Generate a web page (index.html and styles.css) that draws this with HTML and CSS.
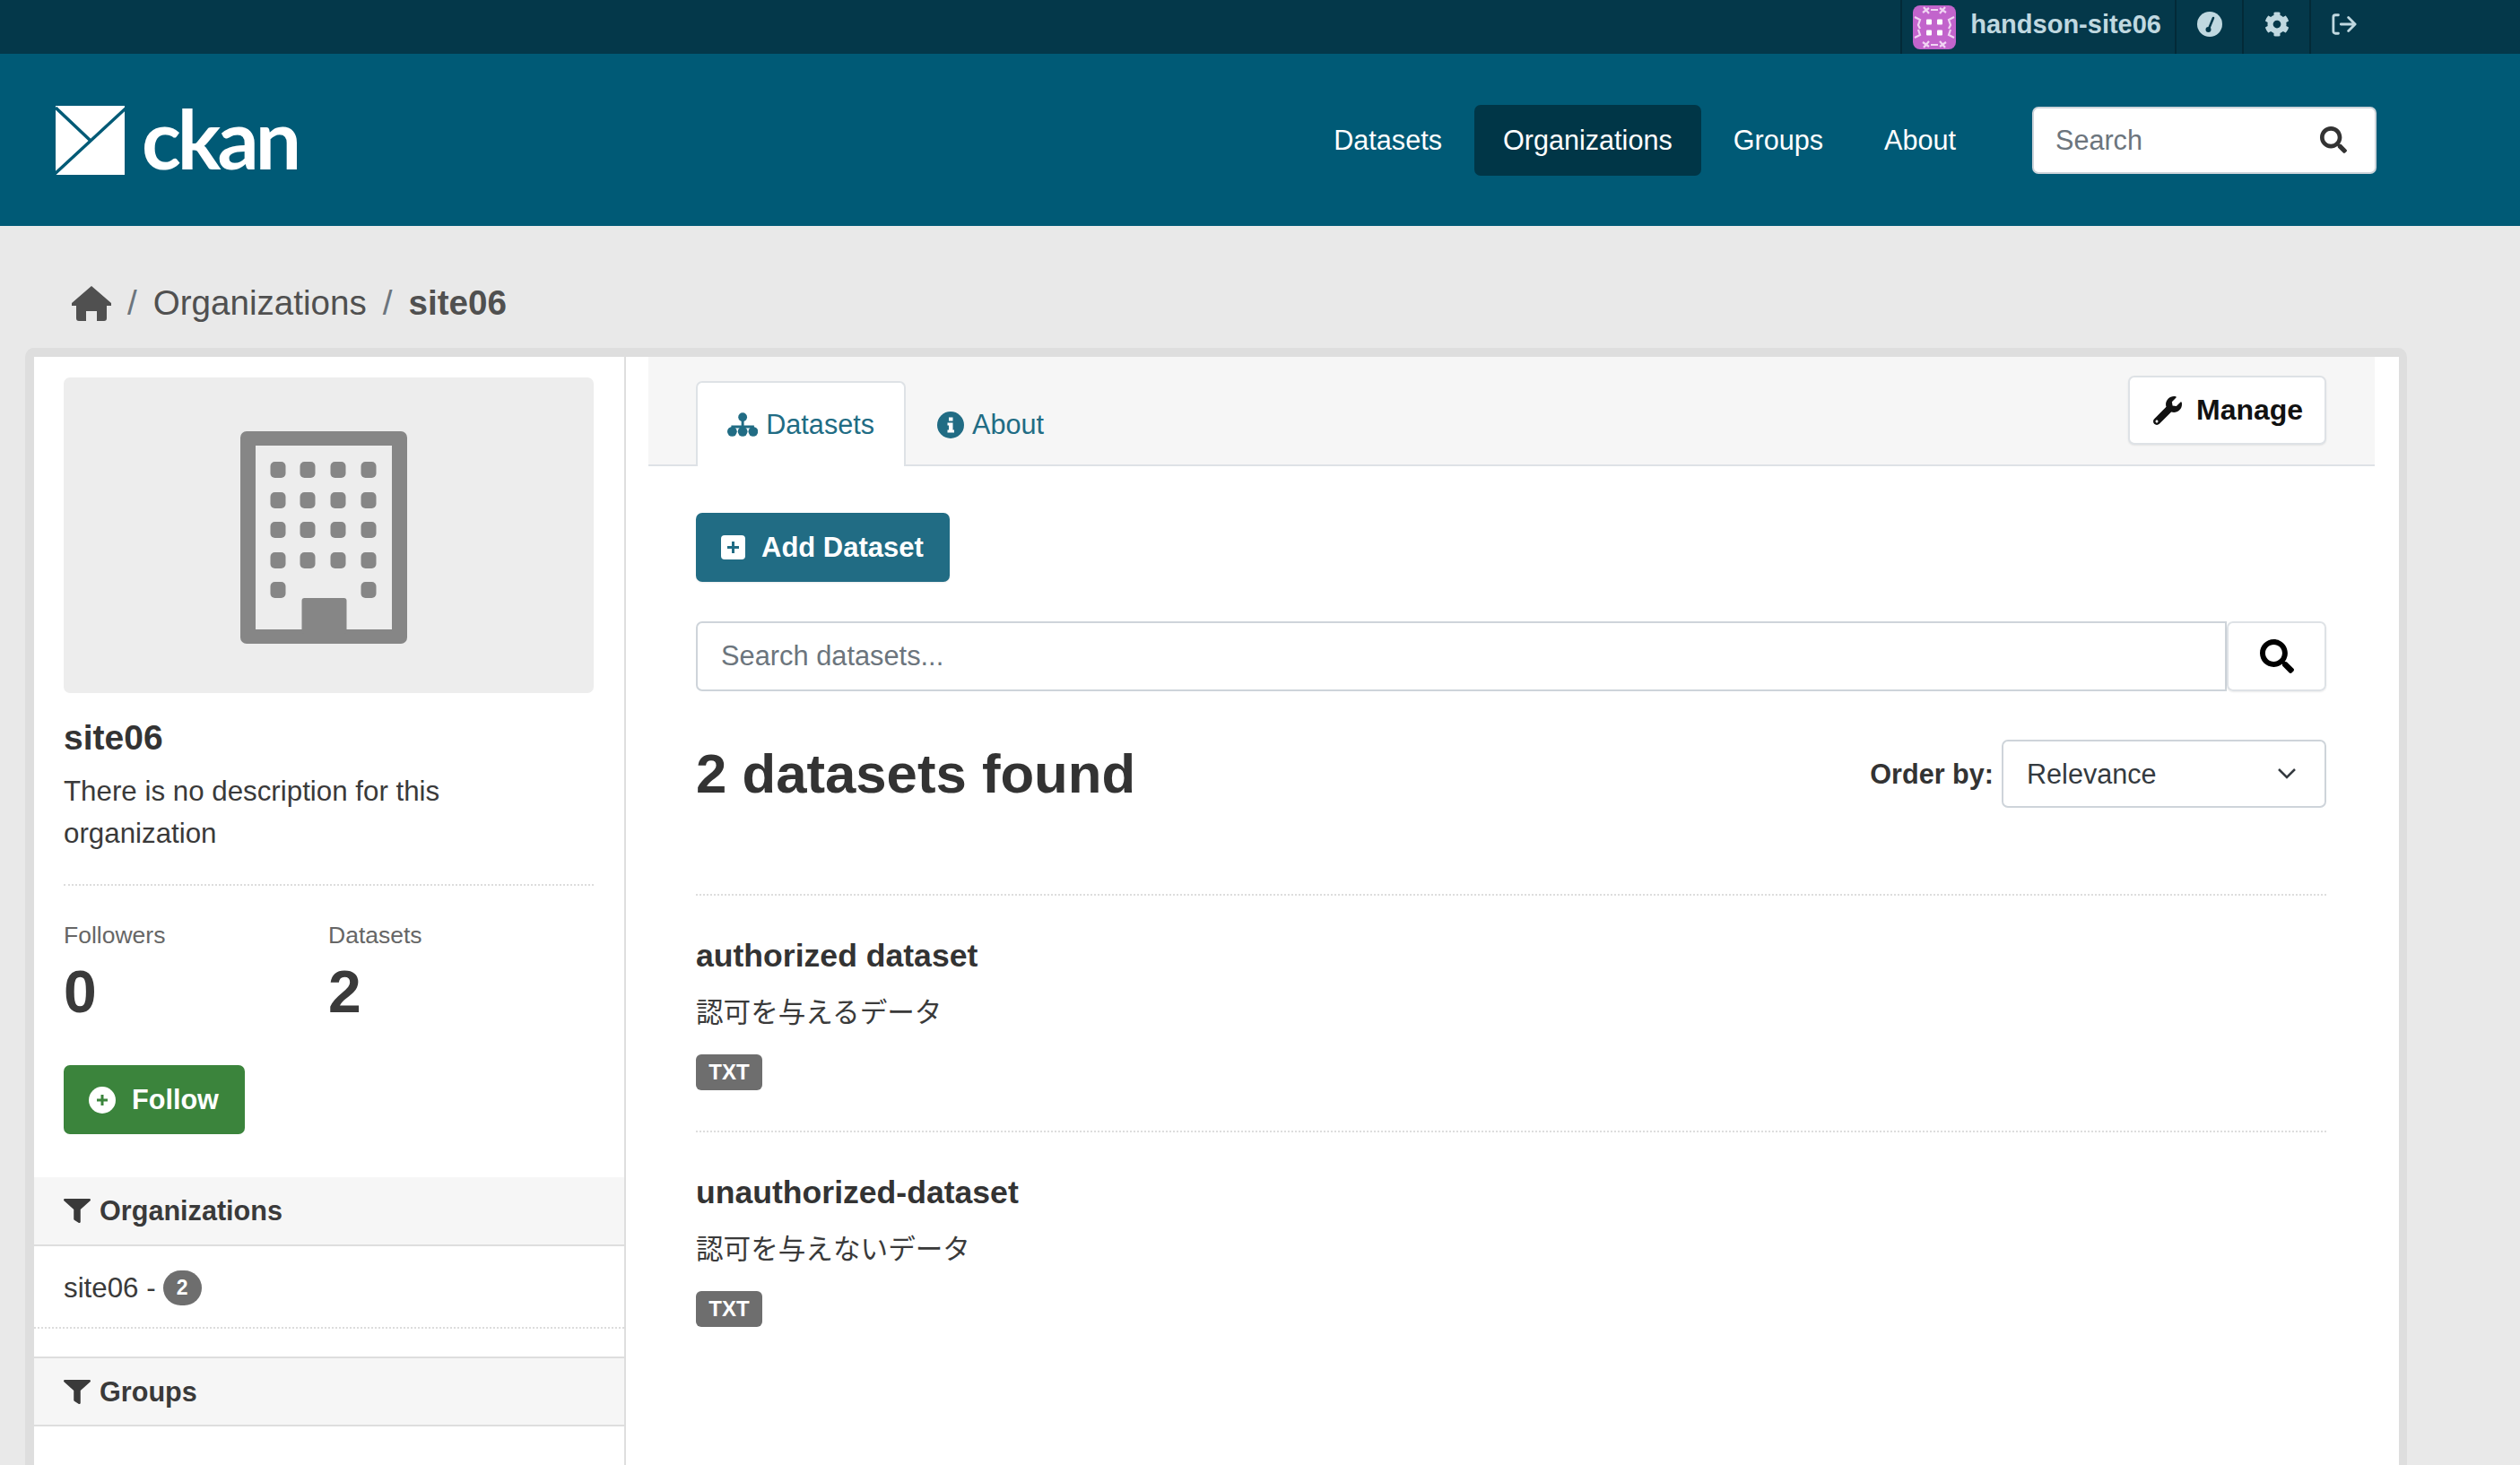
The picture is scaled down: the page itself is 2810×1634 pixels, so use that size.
FILE: index.html
```html
<!DOCTYPE html>
<html lang="en">
<head>
<meta charset="utf-8">
<title>site06 - Organizations - CKAN</title>
<link rel="stylesheet" href="styles.css">
</head>
<body>

<div class="account">
	<a class="account-item account-user">
		<svg class="avatar" viewBox="0 0 48 49">
			<rect width="48" height="49" rx="8" fill="#c264cc"/>
			<g fill="#fff">
				<rect x="15" y="15.5" width="6" height="6" rx="1"/><rect x="27" y="15.5" width="6" height="6" rx="1"/>
				<rect x="15" y="27.5" width="6" height="6" rx="1"/><rect x="27" y="27.5" width="6" height="6" rx="1"/>
			</g>
			<g stroke="#f0d4f3" stroke-width="2.2" fill="none">
				<path d="M12 2l6 7M18 3l-7 5M36 2l-6 7M30 3l7 5M12 47l6-7M18 46l-7-5M36 47l-6-7M30 46l7-5"/>
				<path d="M2 13l6 3-2 6 2 4M46 13l-6 3 2 6-2 4M2 36l6-3-2-6M46 36l-6-3 2-6M20 5h8M20 44h8"/>
			</g>
		</svg>
		<span class="account-name">handson-site06</span>
	</a>
	<a class="account-item">
		<svg class="account-icon" viewBox="0 0 28 28">
			<circle cx="14" cy="14" r="14" fill="#c0d8e0"/>
			<path d="M13 19l5-12" stroke="#04384a" stroke-width="2.6" stroke-linecap="round"/>
			<circle cx="12.5" cy="20" r="3" fill="#04384a"/>
		</svg>
	</a>
	<a class="account-item">
		<svg class="account-icon" viewBox="0 0 512 512"><path fill="#c0d8e0" d="M487.4 315.7l-42.6-24.6c4.3-23.2 4.3-47 0-70.2l42.6-24.6c4.9-2.8 7.1-8.6 5.5-14-11.1-35.6-30-67.8-54.7-94.6-3.8-4.1-10-5.1-14.8-2.3L380.8 110c-17.9-15.4-38.5-27.3-60.8-35.1V25.8c0-5.6-3.9-10.5-9.4-11.7-36.7-8.2-74.3-7.8-109.2 0-5.5 1.2-9.4 6.1-9.4 11.7V75c-22.2 7.9-42.8 19.8-60.8 35.1L88.7 85.5c-4.9-2.8-11-1.9-14.8 2.3-24.7 26.7-43.6 58.9-54.7 94.6-1.7 5.4.6 11.2 5.5 14L67.3 221c-4.3 23.2-4.3 47 0 70.2l-42.6 24.6c-4.9 2.8-7.1 8.6-5.5 14 11.1 35.6 30 67.8 54.7 94.6 3.8 4.1 10 5.1 14.8 2.3l42.6-24.6c17.9 15.4 38.5 27.3 60.8 35.1v49.2c0 5.6 3.9 10.5 9.4 11.7 36.7 8.2 74.3 7.8 109.2 0 5.5-1.2 9.4-6.1 9.4-11.7v-49.2c22.2-7.9 42.8-19.8 60.8-35.1l42.6 24.6c4.9 2.8 11 1.9 14.8-2.3 24.7-26.7 43.6-58.9 54.7-94.6 1.5-5.5-.7-11.3-5.6-14.1zM256 336c-44.1 0-80-35.9-80-80s35.9-80 80-80 80 35.9 80 80-35.9 80-80 80z"/></svg>
	</a>
	<a class="account-item">
		<svg class="account-icon" viewBox="0 0 30 30" fill="none" stroke="#c0d8e0" stroke-width="3" stroke-linecap="round" stroke-linejoin="round">
			<path d="M8 4H4.5a2.5 2.5 0 0 0-2.5 2.5v17a2.5 2.5 0 0 0 2.5 2.5H8M11 15h17M20 7l8 8-8 8"/>
		</svg>
	</a>
</div>

<header class="masthead">
	<a class="logo">
		<svg class="logo-mark" viewBox="0 0 77 77">
			<rect width="77" height="77" fill="#fff"/>
			<path d="M0 2L38 38M78 3L-1 76" stroke="#005a76" stroke-width="3.5" fill="none"/>
		</svg>
		<span class="logo-text">ckan</span>
	</a>
	<nav class="main-nav">
		<a class="nav-link">Datasets</a>
		<a class="nav-link active">Organizations</a>
		<a class="nav-link">Groups</a>
		<a class="nav-link">About</a>
	</nav>
	<div class="site-search">
		<span class="placeholder">Search</span>
		<svg class="search-icon small" viewBox="0 0 512 512"><path fill="#333" d="M505 442.7L405.3 343c-4.5-4.5-10.6-7-17-7H372c27.6-35.3 44-79.7 44-128C416 93.1 322.9 0 208 0S0 93.1 0 208s93.1 208 208 208c48.3 0 92.7-16.4 128-44v16.3c0 6.4 2.5 12.5 7 17l99.7 99.7c9.4 9.4 24.6 9.4 33.9 0l28.3-28.3c9.4-9.4 9.4-24.6.1-34zM208 336c-70.7 0-128-57.2-128-128 0-70.7 57.2-128 128-128 70.7 0 128 57.2 128 128 0 70.7-57.2 128-128 128z"/></svg>
	</div>
</header>

<div class="breadcrumb">
	<svg class="home-icon" viewBox="0 0 44 39">
		<path fill="#505050" d="M22 0L44 19v3H39V36a3 3 0 0 1-3 3H28V28H16V39H8a3 3 0 0 1-3-3V22H0V19z"/>
	</svg>
	<span class="crumb-sep">/</span>
	<a class="crumb">Organizations</a>
	<span class="crumb-sep">/</span>
	<a class="crumb current">site06</a>
</div>

<div class="wrapper">
	<aside class="sidebar">
		<div class="org-info">
			<div class="org-image">
				<svg class="building" viewBox="0 0 186 237">
					<rect width="186" height="237" rx="7" fill="#868686"/>
					<rect x="17" y="16" width="152" height="205" fill="#ededed"/>
					<g fill="#868686">
						<rect x="33.5" y="34" width="17" height="18" rx="5"/><rect x="66.5" y="34" width="17" height="18" rx="5"/><rect x="100.5" y="34" width="17" height="18" rx="5"/><rect x="134.5" y="34" width="17" height="18" rx="5"/>
						<rect x="33.5" y="68" width="17" height="18" rx="5"/><rect x="66.5" y="68" width="17" height="18" rx="5"/><rect x="100.5" y="68" width="17" height="18" rx="5"/><rect x="134.5" y="68" width="17" height="18" rx="5"/>
						<rect x="33.5" y="101" width="17" height="18" rx="5"/><rect x="66.5" y="101" width="17" height="18" rx="5"/><rect x="100.5" y="101" width="17" height="18" rx="5"/><rect x="134.5" y="101" width="17" height="18" rx="5"/>
						<rect x="33.5" y="135" width="17" height="18" rx="5"/><rect x="66.5" y="135" width="17" height="18" rx="5"/><rect x="100.5" y="135" width="17" height="18" rx="5"/><rect x="134.5" y="135" width="17" height="18" rx="5"/>
						<rect x="33.5" y="168" width="17" height="18" rx="5"/><rect x="134.5" y="168" width="17" height="18" rx="5"/>
						<rect x="68.5" y="186" width="50" height="40" rx="3"/>
					</g>
				</svg>
			</div>
			<h2 class="org-name">site06</h2>
			<p class="org-desc">There is no description for this organization</p>
			<div class="org-stats">
				<div class="stat">
					<div class="stat-label">Followers</div>
					<div class="stat-value">0</div>
				</div>
				<div class="stat">
					<div class="stat-label">Datasets</div>
					<div class="stat-value">2</div>
				</div>
			</div>
			<a class="btn-follow">
				<svg class="btn-icon" viewBox="0 0 30 30">
					<circle cx="15" cy="15" r="15" fill="#fff"/>
					<path d="M15 9v12M9 15h12" stroke="#3b843c" stroke-width="3"/>
				</svg>
				Follow
			</a>
		</div>

		<section class="facet">
			<h3 class="facet-title">
				<svg class="filter-icon" viewBox="0 0 512 512" preserveAspectRatio="none"><path fill="#3a3a3a" d="M487.976 0H24.028C2.71 0-8.047 25.866 7.058 40.971L192 225.941V432c0 7.831 3.821 15.17 10.237 19.662l80 55.98C298.02 518.69 320 507.493 320 487.98V225.941l184.947-184.97C520.021 25.896 509.338 0 487.976 0z"/></svg>
				Organizations
			</h3>
			<div class="facet-item">site06 - <span class="count">2</span></div>
		</section>

		<section class="facet">
			<h3 class="facet-title">
				<svg class="filter-icon" viewBox="0 0 512 512" preserveAspectRatio="none"><path fill="#3a3a3a" d="M487.976 0H24.028C2.71 0-8.047 25.866 7.058 40.971L192 225.941V432c0 7.831 3.821 15.17 10.237 19.662l80 55.98C298.02 518.69 320 507.493 320 487.98V225.941l184.947-184.97C520.021 25.896 509.338 0 487.976 0z"/></svg>
				Groups
			</h3>
		</section>
	</aside>

	<main class="primary">
		<div class="tabs">
			<a class="tab active">
				<svg class="tab-icon" viewBox="0 0 35 27" fill="#216c84">
					<circle cx="17.5" cy="5" r="5"/>
					<path d="M16 8h3v6.500H30.500V20h-3v-2.500H19V20h-3v-2.500H7.500V20h-3v-5.500H16z"/>
					<circle cx="5.5" cy="21.5" r="5.5"/><circle cx="17.5" cy="21.5" r="5.5"/><circle cx="29.5" cy="21.5" r="5.5"/>
				</svg>
				Datasets
			</a>
			<a class="tab">
				<svg class="tab-icon round" viewBox="0 0 30 30">
					<circle cx="15" cy="15" r="15" fill="#216c84"/>
					<path fill="#fff" d="M13 6.500h4.500v4H13zM11.500 12.500h6v8h1.500v3h-7.500v-3h1.500v-5h-1.500z"/>
				</svg>
				About
			</a>
			<a class="btn-manage">
				<svg class="manage-icon" viewBox="0 0 512 512"><path fill="#111" d="M507.73 109.1c-2.24-9.03-13.54-12.09-20.12-5.51l-74.36 74.36-67.88-11.31-11.31-67.88 74.36-74.36c6.62-6.62 3.43-17.9-5.66-20.16-47.38-11.74-99.55.91-136.58 37.93-39.64 39.64-50.55 97.1-34.05 147.2L18.74 402.76c-24.99 24.99-24.99 65.51 0 90.5 24.99 24.99 65.51 24.99 90.5 0l213.21-213.21c50.12 16.71 107.47 5.68 147.37-34.22 37.07-37.07 49.7-89.32 37.91-136.73zM64 472c-13.25 0-24-10.75-24-24 0-13.26 10.75-24 24-24s24 10.74 24 24c0 13.25-10.75 24-24 24z"/></svg>
				Manage
			</a>
		</div>

		<div class="module">
			<a class="btn-add">
				<svg class="add-icon" viewBox="0 0 27 27">
					<rect width="27" height="27" rx="4" fill="#fff"/>
					<path d="M13.5 7v13M7 13.5h13" stroke="#216c84" stroke-width="3"/>
				</svg>
				Add Dataset
			</a>

			<div class="dataset-search">
				<div class="search-input">Search datasets...</div>
				<a class="search-btn">
					<svg class="search-icon" viewBox="0 0 512 512"><path fill="#000" d="M505 442.7L405.3 343c-4.5-4.5-10.6-7-17-7H372c27.6-35.3 44-79.7 44-128C416 93.1 322.9 0 208 0S0 93.1 0 208s93.1 208 208 208c48.3 0 92.7-16.4 128-44v16.3c0 6.4 2.5 12.5 7 17l99.7 99.7c9.4 9.4 24.6 9.4 33.9 0l28.3-28.3c9.4-9.4 9.4-24.6.1-34zM208 336c-70.7 0-128-57.2-128-128 0-70.7 57.2-128 128-128 70.7 0 128 57.2 128 128 0 70.7-57.2 128-128 128z"/></svg>
				</a>
			</div>

			<div class="results-head">
				<h1 class="results-count">2 datasets found</h1>
				<div class="order-by">
					<span class="order-label">Order by:</span>
					<div class="order-select">
						Relevance
						<svg class="chevron" viewBox="0 0 22 14" fill="none" stroke="#343a40" stroke-width="2.5"><path d="M2 2l9 9 9-9"/></svg>
					</div>
				</div>
			</div>

			<ul class="dataset-list">
				<li class="dataset">
					<h3 class="dataset-title">authorized dataset</h3>
					<div class="dataset-desc">認可を与えるデータ</div>
					<span class="format">TXT</span>
				</li>
				<li class="dataset">
					<h3 class="dataset-title">unauthorized-dataset</h3>
					<div class="dataset-desc">認可を与えないデータ</div>
					<span class="format">TXT</span>
				</li>
			</ul>
		</div>
	</main>
</div>

</body>
</html>
```

FILE: styles.css
```css
html,body{
	margin:0;
	height:1634px;
	overflow:hidden;
}
body{
	display:flex;
	flex-direction:column;
	background-color:#e9e9e9;
	color:#3a3a3a;
	font-family:"Liberation Sans","Noto Sans CJK JP",sans-serif;
	font-size:31.3px;
}
h1,h2,h3,p,ul{
	margin:0;
	padding:0;
}
ul{
	list-style:none;
}

/* account bar */
.account{
	display:flex;
	justify-content:flex-end;
	flex:none;
	height:60px;
	padding-right:160px;
	background-color:#04384a;
}
.account-item{
	display:flex;
	align-items:center;
	justify-content:center;
	width:73px;
	border-left:2px solid #032a38;
}
.account-user{
	width:auto;
	padding:0 15px 0 12px;
	gap:16px;
}
.avatar{
	width:48px;
	height:49px;
}
.account-name{
	margin-bottom:6px;
	color:#c0d8e0;
	font-size:29px;
	font-weight:bold;
}
.account-icon{
	width:28px;
	height:28px;
	margin-bottom:6px;
}

/* masthead */
.masthead{
	display:flex;
	align-items:center;
	flex:none;
	height:192px;
	padding:0 160px 0 62px;
	background-color:#005a76;
	color:#fff;
}
.logo{
	display:flex;
	align-items:center;
	gap:19px;
	margin-right:auto;
}
.logo-mark{
	width:77px;
	height:77px;
}
.logo-text{
	margin-top:-6px;
	font-family:"Lato",sans-serif;
	font-size:91px;
	font-weight:bold;
	line-height:77px;
	letter-spacing:-4px;
}
.main-nav{
	display:flex;
	gap:4px;
	margin-right:53px;
}
.nav-link{
	padding:24px 32px;
	border-radius:7px;
	font-size:30.6px;
	line-height:31px;
}
.nav-link.active{
	background-color:#003647;
}
.site-search{
	display:flex;
	align-items:center;
	justify-content:space-between;
	box-sizing:border-box;
	width:384px;
	height:75px;
	padding:0 31px 0 24px;
	background-color:#fff;
	border:2px solid #ced4da;
	border-radius:7px;
}
.placeholder{
	color:#6c757d;
	font-size:30.6px;
}
.search-icon{
	width:38px;
	height:38px;
}
.search-icon.small{
	width:30px;
	height:32px;
}

/* breadcrumb */
.breadcrumb{
	display:flex;
	align-items:center;
	flex:none;
	box-sizing:border-box;
	height:136px;
	padding:36px 0 0 80px;
	font-size:38.6px;
	color:#505050;
}
.home-icon{
	width:44px;
	height:39px;
}
.crumb-sep{
	margin:0 18px;
	color:#6c757d;
}
.crumb.current{
	font-weight:bold;
}

/* page wrapper */
.wrapper{
	display:flex;
	flex:1;
	width:2656px;
	box-sizing:border-box;
	margin-left:28px;
	background-color:#fff;
	border:10px solid #dedede;
	border-right-width:9px;
	border-bottom:none;
	border-radius:10px 10px 0 0;
}
.sidebar{
	flex:none;
	width:658px;
	border-right:2px solid #dedede;
}
.org-info{
	padding:23px 34px 48px 33px;
}
.org-image{
	display:flex;
	align-items:center;
	justify-content:center;
	height:352px;
	padding:4px 11px 0 0;
	background-color:#ededed;
	border-radius:7px;
	box-sizing:border-box;
}
.building{
	width:186px;
	height:237px;
	filter:blur(.6px);
}
.org-name{
	margin-top:27px;
	color:#333;
	font-size:39px;
	line-height:46px;
}
.org-desc{
	margin-top:13px;
	padding-bottom:33px;
	border-bottom:2px dotted #dddddd;
	line-height:47px;
}
.org-stats{
	display:flex;
	margin-top:37px;
}
.stat{
	width:295px;
}
.stat-label{
	color:#666;
	font-size:26.5px;
	line-height:36px;
}
.stat-value{
	margin-top:9px;
	font-size:66px;
	font-weight:bold;
	line-height:72px;
}
.btn-follow{
	display:flex;
	align-items:center;
	gap:18px;
	box-sizing:border-box;
	width:202px;
	height:77px;
	margin-top:46px;
	padding-left:28px;
	background-color:#3b843c;
	border-radius:7px;
	color:#fff;
	font-size:30.6px;
	font-weight:bold;
}
.btn-icon{
	width:30px;
	height:30px;
}

/* facets */
.facet-title{
	display:flex;
	align-items:center;
	gap:10px;
	box-sizing:border-box;
	height:77px;
	padding-left:33px;
	background-color:#f6f6f6;
	border-bottom:2px solid #dedede;
	color:#3a3a3a;
	font-size:30.6px;
}
.facet + .facet .facet-title{
	height:78px;
	border-top:2px solid #dedede;
}
.filter-icon{
	width:30px;
	height:27px;
}
.facet-item{
	display:flex;
	align-items:center;
	gap:8px;
	box-sizing:border-box;
	height:92px;
	padding:3px 0 0 33px;
	margin-bottom:31px;
	border-bottom:2px dotted #dddddd;
}
.count{
	display:inline-block;
	width:43px;
	height:39px;
	background-color:#6e6e6e;
	border-radius:20px;
	color:#fff;
	font-size:23px;
	font-weight:bold;
	line-height:39px;
	text-align:center;
}

/* main column */
.primary{
	flex:1;
	padding:0 27px 0 25px;
}
.tabs{
	display:flex;
	align-items:flex-end;
	position:relative;
	height:122px;
	box-sizing:border-box;
	padding-left:53px;
	background-color:#f6f6f6;
	border-bottom:2px solid #dee2e6;
}
.tab{
	display:flex;
	align-items:center;
	gap:9px;
	box-sizing:border-box;
	height:95px;
	margin-bottom:-2px;
	padding:0 33px;
	border:2px solid transparent;
	border-bottom:none;
	border-radius:7px 7px 0 0;
	color:#216c84;
	font-size:30.6px;
}
.tab.active{
	width:234px;
	background-color:#fff;
	border-color:#dee2e6;
}
.tab-icon{
	width:35px;
	height:27px;
}
.tab-icon.round{
	width:30px;
	height:30px;
}
.btn-manage{
	display:flex;
	align-items:center;
	gap:16px;
	position:absolute;
	top:21px;
	right:54px;
	box-sizing:border-box;
	width:221px;
	height:77px;
	padding-left:26px;
	background-color:#fff;
	border:2px solid #dee2e6;
	border-radius:7px;
	box-shadow:0 1px 2px rgba(0,0,0,.08);
	color:#111;
	font-size:32px;
	font-weight:bold;
}
.manage-icon{
	width:32px;
	height:32px;
}
.module{
	padding:52px 54px 0 53px;
}
.btn-add{
	display:flex;
	align-items:center;
	gap:18px;
	box-sizing:border-box;
	width:283px;
	height:77px;
	padding-left:28px;
	background-color:#216c84;
	border-radius:7px;
	box-shadow:0 1px 2px rgba(0,0,0,.08);
	color:#fff;
	font-size:31px;
	font-weight:bold;
}
.add-icon{
	width:27px;
	height:27px;
}
.dataset-search{
	display:flex;
	height:78px;
	margin-top:44px;
}
.search-input{
	flex:1;
	box-sizing:border-box;
	display:flex;
	align-items:center;
	padding-left:26px;
	border:2px solid #ced4da;
	border-radius:7px 0 0 7px;
	color:#6c757d;
	font-size:30.8px;
}
.search-btn{
	display:flex;
	align-items:center;
	justify-content:center;
	box-sizing:border-box;
	width:111px;
	border:2px solid #dee2e6;
	border-radius:7px;
	box-shadow:0 1px 2px rgba(0,0,0,.08);
}
.results-head{
	display:flex;
	align-items:center;
	justify-content:space-between;
	height:76px;
	margin-top:54px;
}
.results-count{
	color:#333;
	font-size:61.7px;
	line-height:76px;
}
.order-by{
	display:flex;
	align-items:center;
	gap:9px;
}
.order-label{
	color:#333;
	font-size:30.6px;
	font-weight:bold;
}
.order-select{
	display:flex;
	align-items:center;
	justify-content:space-between;
	box-sizing:border-box;
	width:362px;
	height:76px;
	padding:0 31px 0 26px;
	border:2px solid #ced4da;
	border-radius:7px;
	color:#343a40;
	font-size:30.6px;
}
.chevron{
	width:22px;
	height:14px;
}
.dataset-list{
	margin-top:96px;
}
.dataset{
	box-sizing:border-box;
	height:264px;
	padding-top:47px;
	border-top:2px dotted #dddddd;
}
.dataset-title{
	color:#333;
	font-size:35.6px;
	line-height:40px;
}
.dataset-desc{
	margin-top:23px;
	font-size:30.6px;
	line-height:40px;
}
.format{
	display:block;
	width:74px;
	height:40px;
	margin-top:27px;
	background-color:#6e6e6e;
	border-radius:6px;
	color:#fff;
	font-size:24px;
	font-weight:bold;
	line-height:40px;
	text-align:center;
}
```
